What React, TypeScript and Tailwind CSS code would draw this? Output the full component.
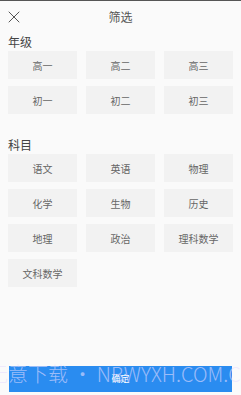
import { X } from "lucide-react";

const grades = ["高一", "高二", "高三", "初一", "初二", "初三"];
const subjects = [
  "语文",
  "英语",
  "物理",
  "化学",
  "生物",
  "历史",
  "地理",
  "政治",
  "理科数学",
  "文科数学",
];

function OptionGrid({ items }: { items: string[] }) {
  return (
    <div className="grid grid-cols-3 gap-x-[9px] gap-y-[7px] px-[8px]">
      {items.map((item) => (
        <div
          key={item}
          className="flex h-[28px] items-center justify-center bg-[#f2f2f2] text-[10px] text-[#666]"
        >
          {item}
        </div>
      ))}
    </div>
  );
}

export default function App() {
  return (
    <div
      className="relative flex h-[395px] w-[241px] flex-col overflow-hidden border-t border-[#555] bg-[#fafafa]"
      style={{ fontFamily: '"Noto Sans CJK SC", "Noto Sans", sans-serif' }}
    >
      <header className="relative flex h-[32px] shrink-0 items-center justify-center">
        <X
          className="absolute top-[6px] left-[4px] text-[#555]"
          size={20}
          strokeWidth={1.2}
        />
        <span className="text-[12px] text-[#555]">筛选</span>
      </header>

      <h2 className="px-[8px] text-[12px] leading-[18px] text-[#444]">年级</h2>
      <OptionGrid items={grades} />

      <h2 className="mt-[22px] px-[8px] text-[12px] leading-[18px] text-[#444]">
        科目
      </h2>
      <OptionGrid items={subjects} />

      <div className="mt-auto px-[9px] pb-[3px]">
        <button className="flex h-[26px] w-full items-center justify-center bg-[#2a8cf0] text-[9px] text-white">
          确定
        </button>
      </div>

      <div className="pointer-events-none absolute top-[361px] left-[-12px] text-[20px] leading-[24px] font-light whitespace-nowrap text-[rgba(232,222,255,0.6)]">
        无意下载 • NBWYXH.COM.CN
      </div>
    </div>
  );
}
